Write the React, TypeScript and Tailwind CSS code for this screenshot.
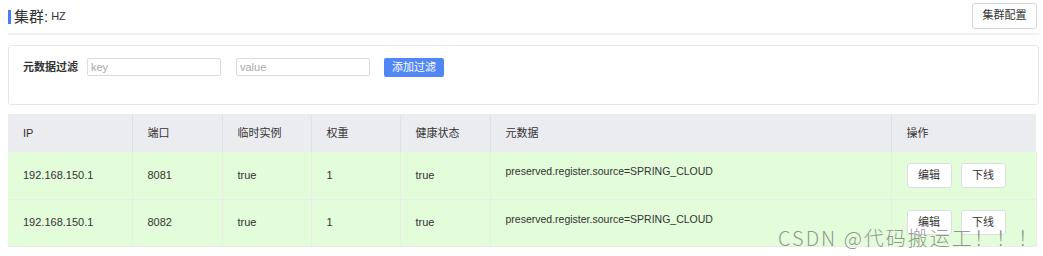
import React from "react";

const rows = [
  { ip: "192.168.150.1", port: "8081", ephemeral: "true", weight: "1", healthy: "true", meta: "preserved.register.source=SPRING_CLOUD" },
  { ip: "192.168.150.1", port: "8082", ephemeral: "true", weight: "1", healthy: "true", meta: "preserved.register.source=SPRING_CLOUD" },
];

const cols = [
  { label: "IP", w: "w-[124px]" },
  { label: "端口", w: "w-[90px]" },
  { label: "临时实例", w: "w-[89px]" },
  { label: "权重", w: "w-[89px]" },
  { label: "健康状态", w: "w-[90px]" },
  { label: "元数据", w: "w-[401px]" },
  { label: "操作", w: "w-[145px]" },
];

export default function App() {
  return (
    <div className="relative w-[1043px] h-[256px] overflow-hidden bg-white pl-2 pr-1 text-[#333] font-['Liberation_Sans','Noto_Sans_CJK_SC',sans-serif]">
      {/* Header */}
      <div className="flex items-center justify-between h-[35px] border-b-2 border-[#f0f0f2] pr-[2px]">
        <div className="flex items-center">
          <span className="w-[3px] h-[14px] bg-[#4a7cf6] mr-[3px]" />
          <span className="text-[15px] leading-none">集群:</span>
          <span className="text-[11px] ml-[3px] leading-none">HZ</span>
        </div>
        <button className="h-[26px] w-[65px] mb-[2px] border border-[#d4d6dc] rounded-[3px] text-[11px] text-[#333] bg-white">
          集群配置
        </button>
      </div>

      {/* Filter */}
      <div className="mt-[10px] h-[60px] border border-[#e6e7eb] rounded-[3px] px-[14px] pt-[11px]">
        <div className="flex items-center h-[20px]">
          <span className="text-[11px] font-semibold mr-[9px] whitespace-nowrap">元数据过滤</span>
          <input
            placeholder="key"
            className="w-[134px] h-[18px] border border-[#d9dbe1] rounded-[2px] px-[3px] text-[11px] placeholder:text-[#aaa] outline-none"
          />
          <input
            placeholder="value"
            className="ml-[15px] w-[134px] h-[18px] border border-[#d9dbe1] rounded-[2px] px-[3px] text-[11px] placeholder:text-[#aaa] outline-none"
          />
          <button className="ml-[14px] w-[60px] h-[19px] rounded-[2px] bg-[#5087f5] text-white text-[11px]">
            添加过滤
          </button>
        </div>
      </div>

      {/* Table */}
      <table className="mt-[9px] w-[1028px] border-collapse table-fixed text-[11px]">
        <thead>
          <tr className="h-[38px] bg-[#ebecf0]">
            {cols.map((c) => (
              <th key={c.label} className={`${c.w} text-left font-normal px-[15px] border-r border-[#dfe0e4] last:border-r-0`}>
                {c.label}
              </th>
            ))}
          </tr>
        </thead>
        <tbody>
          {rows.map((r) => (
            <tr key={r.port} className="h-[47px] bg-[#e3fcda] border-b border-[#e9ede6]">
              <td className="px-[15px] border-r border-[#e9ede6]">{r.ip}</td>
              <td className="px-[15px] border-r border-[#e9ede6]">{r.port}</td>
              <td className="px-[15px] border-r border-[#e9ede6]">{r.ephemeral}</td>
              <td className="px-[15px] border-r border-[#e9ede6]">{r.weight}</td>
              <td className="px-[15px] border-r border-[#e9ede6]">{r.healthy}</td>
              <td className="px-[15px] pt-[11px] align-top leading-[17px] text-[10.5px] border-r border-[#e9ede6]">{r.meta}</td>
              <td className="pl-[15px] border-r border-[#e9ede6]">
                <div className="flex gap-[9px]">
                  <button className="h-[25px] w-[45px] bg-white border border-[#dcdee3] rounded-[3px] text-[11px]">编辑</button>
                  <button className="h-[25px] w-[45px] bg-white border border-[#dcdee3] rounded-[3px] text-[11px]">下线</button>
                </div>
              </td>
            </tr>
          ))}
        </tbody>
      </table>

      {/* Watermark */}
      <div className="absolute left-[778px] top-[225px] text-[20px] tracking-[2px] leading-[26px] font-light text-[#6b6b6b]/70 font-['Noto_Sans_CJK_SC',sans-serif] whitespace-nowrap pointer-events-none">
        CSDN @代码搬运工！！！
      </div>
    </div>
  );
}
